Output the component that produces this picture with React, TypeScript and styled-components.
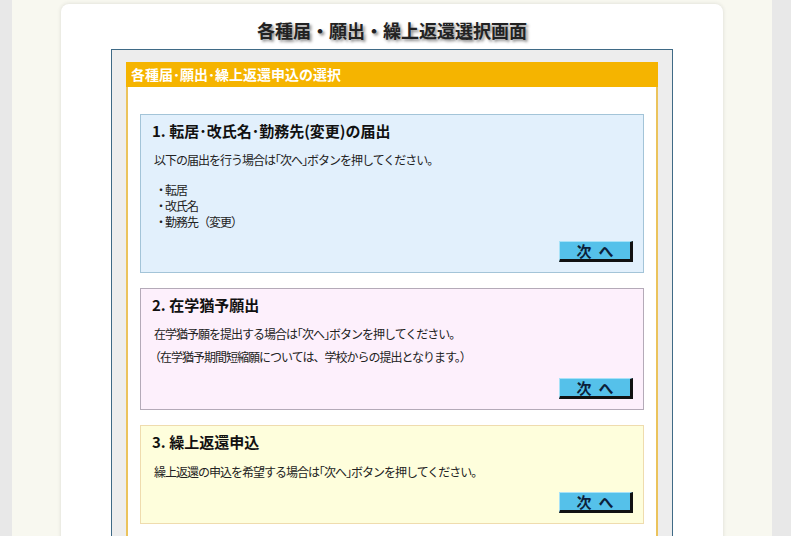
import React from "react"
import styled, { createGlobalStyle } from "styled-components"

const GlobalStyle = createGlobalStyle`
  html, body {
    margin: 0;
    padding: 0;
    background: #e8e8e8;
    font-family: "Noto Sans CJK JP", "Noto Sans", sans-serif;
    color: #222;
  }
`

const Page = styled.div`
  width: 760px;
  margin-left: 12px;
  min-height: 536px;
  background: #f8f8f0;
  padding-top: 4px;
  box-sizing: border-box;
`

const Card = styled.div`
  width: 662px;
  margin-left: 49px;
  min-height: 532px;
  background: #fff;
  border-radius: 8px 8px 0 0;
  box-shadow: 0 0 4px rgba(0, 0, 0, 0.12);
  padding-top: 14px;
  box-sizing: border-box;
`

const Title = styled.h1`
  margin: 0;
  text-align: center;
  font-size: 18px;
  line-height: 24px;
  font-weight: bold;
  color: #222;
  text-shadow: 2px 2px 3px #888;
`

const Frame = styled.div`
  width: 532px;
  margin: 7px auto 0;
  border: 1px solid #3f6a86;
  background: #ededed;
  padding: 12px 14px 0;
`

const Section = styled.div`
  border-left: 2px solid #ebc35c;
  border-right: 2px solid #ebc35c;
  background: #fff;
`

const SectionHead = styled.div`
  background: #f5b400;
  color: #fff;
  font-size: 14px;
  font-weight: bold;
  line-height: 25px;
  height: 25px;
  padding-left: 5px;
  margin: 0 -2px;
`

const SectionBody = styled.div`
  padding: 27px 12px 14px;
  display: flex;
  flex-direction: column;
  gap: 15px;
`

const tones = {
  blue: { bg: "#e2f0fc", border: "#a3c4d8" },
  pink: { bg: "#fdf0fc", border: "#b4aab8" },
  yellow: { bg: "#fefedc", border: "#efdcae" },
}

const Box = styled.div<{ $tone: keyof typeof tones; $h: number }>`
  background: ${(p) => tones[p.$tone].bg};
  border: 1px solid ${(p) => tones[p.$tone].border};
  height: ${(p) => p.$h}px;
  box-sizing: border-box;
  padding: 6px 10px 0 11px;
  display: flex;
  flex-direction: column;
`

const BoxTitle = styled.h2`
  margin: 0;
  font-size: 15px;
  line-height: 20px;
  font-weight: bold;
  color: #111;
`

const Text = styled.p<{ $top: number; $indent?: number }>`
  margin: ${(p) => p.$top}px 0 0 ${(p) => 2 + (p.$indent ?? 0)}px;
  font-size: 12px;
  line-height: 16px;
  letter-spacing: -1px;
  color: #222;
`

const List = styled.ul`
  list-style: none;
  margin: 14px 0 0 4px;
  padding: 0;
  font-size: 12px;
  line-height: 16px;
  letter-spacing: -1px;
  li::before {
    content: "・";
    display: inline-block;
    width: 10px;
    margin-left: -1px;
  }
`

const Actions = styled.div<{ $top: number }>`
  display: flex;
  justify-content: flex-end;
  margin-top: ${(p) => p.$top}px;
`

const NextButton = styled.button`
  width: 74px;
  height: 21px;
  padding: 0;
  background: #55c1ea;
  border-style: solid;
  border-width: 1px 3px 3px 1px;
  border-color: #a7e2f8 #111 #111 #a7e2f8;
  color: #0c1f3a;
  font-family: "Noto Sans CJK JP", sans-serif;
  font-size: 15px;
  font-weight: bold;
  line-height: 15px;
  letter-spacing: 7px;
  text-indent: 7px;
  cursor: pointer;
`

export default function App() {
  return (
    <>
      <GlobalStyle />
      <Page>
        <Card>
          <Title>各種届・願出・繰上返還選択画面</Title>
          <Frame>
            <Section>
              <SectionHead>各種届･願出･繰上返還申込の選択</SectionHead>
              <SectionBody>
                <Box $tone="blue" $h={159}>
                  <BoxTitle>1. 転居･改氏名･勤務先(変更)の届出</BoxTitle>
                  <Text $top={11}>以下の届出を行う場合は｢次へ｣ボタンを押してください。</Text>
                  <List>
                    <li>転居</li>
                    <li>改氏名</li>
                    <li>勤務先（変更）</li>
                  </List>
                  <Actions $top={11}>
                    <NextButton>次へ</NextButton>
                  </Actions>
                </Box>
                <Box $tone="pink" $h={122}>
                  <BoxTitle>2. 在学猶予願出</BoxTitle>
                  <Text $top={11}>在学猶予願を提出する場合は｢次へ｣ボタンを押してください。</Text>
                  <Text $top={7} $indent={-5}>
                    （在学猶予期間短縮願については、学校からの提出となります。）
                  </Text>
                  <Actions $top={13}>
                    <NextButton>次へ</NextButton>
                  </Actions>
                </Box>
                <Box $tone="yellow" $h={99}>
                  <BoxTitle>3. 繰上返還申込</BoxTitle>
                  <Text $top={12}>繰上返還の申込を希望する場合は｢次へ｣ボタンを押してください。</Text>
                  <Actions $top={12}>
                    <NextButton>次へ</NextButton>
                  </Actions>
                </Box>
              </SectionBody>
            </Section>
          </Frame>
        </Card>
      </Page>
    </>
  )
}
